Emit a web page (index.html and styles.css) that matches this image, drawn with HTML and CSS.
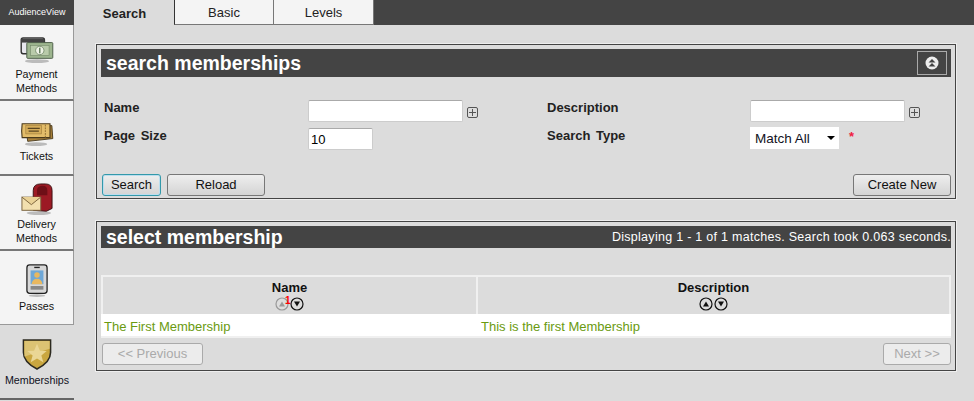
FILE: index.html
```html
<!DOCTYPE html>
<html>
<head>
<meta charset="utf-8">
<title>Memberships</title>
<link rel="stylesheet" href="styles.css">
</head>
<body>
<div class="app">
  <aside class="side">
    <div class="brand">AudienceView</div>
    <a class="nav nav-pay">
      <svg class="ico" viewBox="0 0 36 28"><ellipse cx="18" cy="26" rx="13" ry="2" fill="#bbb"/><rect x="1" y="1" width="25" height="17" rx="2" fill="#e8e8ee" stroke="#333" stroke-width="1.5"/><rect x="1" y="2" width="25" height="4" fill="#444"/><rect x="7" y="6" width="28" height="17" rx="1" fill="#9db58e" stroke="#4a5a45"/><rect x="11" y="9" width="20" height="11" fill="#b9cbaa" stroke="#6f8566" stroke-width=".6"/><circle cx="21" cy="14.500" r="4.500" fill="#eef3e6" stroke="#56704f" stroke-width=".7"/><rect x="20.300" y="11.500" width="1.400" height="6" fill="#56704f"/></svg>
      <span>Payment<br>Methods</span>
    </a>
    <a class="nav nav-tix">
      <svg class="ico" viewBox="0 0 36 28"><ellipse cx="17" cy="26" rx="12" ry="2" fill="#bbb"/><path d="M6 8 L34 6 L35 20 L8 23Z" fill="#a9813a" stroke="#4a3a1c"/><path d="M2 4 H32 V19 H2 Q1 11.500 2 4Z" fill="#e3bd6a" stroke="#4a3a1c" stroke-width="1.200"/><rect x="6" y="6" width="17" height="9" fill="#d5ad5a" stroke="#8d6c30" stroke-width=".5"/><path d="M8 9h13M9 12h11" stroke="#5a4520" stroke-width="1.300"/><path d="M27 5v14" stroke="#8d6c30" stroke-dasharray="2 1"/></svg>
      <span>Tickets</span>
    </a>
    <a class="nav nav-mail">
      <svg class="ico" viewBox="0 0 36 34"><ellipse cx="20" cy="32" rx="13" ry="2" fill="#bbb"/><path d="M14 29 V8 Q14 1 22 1 H27 Q34 1 34 8 V27 L28 30Z" fill="#9c1a24" stroke="#3a1012"/><path d="M18 7 Q19 3 24 3 Q29 3 29 8 V13 H18Z" fill="#6e0f17"/><rect x="2" y="15" width="20" height="14" fill="#f2dfae" stroke="#77603a"/><path d="M2 15 L12 23 L22 15" fill="#e9d196" stroke="#77603a"/></svg>
      <span>Delivery<br>Methods</span>
    </a>
    <a class="nav nav-pass">
      <svg class="ico" viewBox="0 0 24 36"><ellipse cx="12" cy="34.500" rx="9" ry="1.500" fill="#bbb"/><rect x="1" y="1" width="22" height="31" rx="3" fill="#d8d8d8" stroke="#222" stroke-width="1.400"/><rect x="9" y="3" width="6" height="1.500" fill="#222"/><rect x="5" y="7" width="14" height="15" fill="#6fa8d8"/><circle cx="12" cy="12" r="3" fill="#e9b860"/><path d="M6 22 Q7 16 12 16 Q17 16 18 22Z" fill="#e9b860"/><rect x="5" y="24" width="14" height="4" fill="#888"/></svg>
      <span>Passes</span>
    </a>
    <a class="nav nav-badge">
      <svg class="ico" viewBox="0 0 30 32"><path d="M1 1 H29 V14 Q29 24 15 31 Q1 24 1 14Z" fill="#c9a63f" stroke="#2c2a20" stroke-width="1.600"/><path d="M2 2 H28 V10 L2 18Z" fill="#dcc373"/><path d="M15 5 L18 12 L25 12.500 L19.500 17 L21.500 24 L15 20 L8.500 24 L10.500 17 L5 12.500 L12 12Z" fill="#ead695"/></svg>
      <span>Memberships</span>
    </a>
  </aside>
  <main class="main">
    <nav class="tabs">
      <a class="tab tab-active">Search</a>
      <a class="tab">Basic</a>
      <a class="tab">Levels</a>
    </nav>
    <section class="panel panel-search">
      <header class="bar bar-search">
        <h2 class="title">search memberships</h2>
        <span class="collapse"><svg viewBox="0 0 14 14" width="14" height="14"><circle cx="7" cy="7" r="6.500" fill="#eee"/><path d="M3.500 6.500 L7 3 L10.500 6.500ZM3.500 10.500 L7 7 L10.500 10.500Z" fill="#444"/></svg></span>
      </header>
      <div class="form">
        <div class="cell lbl">Name</div>
        <div class="cell"><span class="inp inp-wide"></span><span class="plus"></span></div>
        <div class="cell lbl">Description</div>
        <div class="cell"><span class="inp inp-wide"></span><span class="plus"></span></div>
        <div class="cell lbl lbl-spaced">Page Size</div>
        <div class="cell"><span class="inp inp-small">10</span></div>
        <div class="cell lbl lbl-spaced">Search Type</div>
        <div class="cell"><span class="select">Match All<i class="caret"></i></span><span class="req">*</span></div>
      </div>
      <div class="actions">
        <button class="btn btn-focus">Search</button>
        <button class="btn btn-reload">Reload</button>
        <button class="btn btn-create">Create New</button>
      </div>
    </section>
    <section class="panel panel-select">
      <header class="bar bar-select">
        <h2 class="title">select membership</h2>
        <span class="stats">Displaying 1 - 1 of 1 matches. Search took 0.063 seconds.</span>
      </header>
      <div class="table">
        <div class="th">Name
          <div class="sort sort-name"><span class="arrow arrow-off"><svg viewBox="0 0 14 14"><circle cx="7" cy="7" r="6" fill="#ddd" stroke="#999" stroke-width="1.200"/><path d="M4 9.500 L7 4.500 L10 9.500Z" fill="#999"/></svg><b class="rank">1</b></span><span class="arrow"><svg viewBox="0 0 14 14"><circle cx="7" cy="7" r="6" fill="#ddd" stroke="#111" stroke-width="1.200"/><path d="M4 4.500 L10 4.500 L7 9.500Z" fill="#111"/></svg></span></div>
        </div>
        <div class="th">Description
          <div class="sort"><span class="arrow"><svg viewBox="0 0 14 14"><circle cx="7" cy="7" r="6" fill="#ddd" stroke="#111" stroke-width="1.200"/><path d="M4 9.500 L7 4.500 L10 9.500Z" fill="#111"/></svg></span><span class="arrow"><svg viewBox="0 0 14 14"><circle cx="7" cy="7" r="6" fill="#ddd" stroke="#111" stroke-width="1.200"/><path d="M4 4.500 L10 4.500 L7 9.500Z" fill="#111"/></svg></span></div>
        </div>
        <div class="td">The First Membership</div>
        <div class="td">This is the first Membership</div>
      </div>
      <div class="pager">
        <button class="btn btn-off btn-prev">&lt;&lt; Previous</button>
        <button class="btn btn-off btn-next">Next &gt;&gt;</button>
      </div>
    </section>
  </main>
</div>
</body>
</html>
```
FILE: styles.css
```css
* { box-sizing: border-box; }
html, body { margin: 0; height: 401px; overflow: hidden; }
body { background: #dcdcdc; font-family: "Liberation Sans", Arial, sans-serif; font-size: 13px; color: #000; }
.app { display: flex; height: 401px; }
.side { width: 75px; flex: none; display: flex; flex-direction: column; }
.brand { height: 25px; background: #444; color: #fff; font-size: 9px; line-height: 24px; text-align: center; width: 74px; }
.nav { display: flex; flex-direction: column; align-items: center; width: 74px; height: 75px; background: #f4f4f4; border-right: 1px solid #999; border-bottom: 2px solid #777; font-size: 10.700px; line-height: 14px; text-align: center; color: #111; }
.ico { display: block; flex: none; }
.nav-pay { height: 76px; padding-top: 12px; }
.nav-pay .ico { width: 36px; height: 26px; margin-bottom: 4px; }
.nav-tix { padding-top: 19px; }
.nav-tix .ico { width: 36px; height: 26px; margin-bottom: 3px; }
.nav-mail { padding-top: 7px; }
.nav-mail .ico { width: 36px; height: 32px; margin-bottom: 2px; }
.nav-pass { height: 74px; padding-top: 13px; border-bottom-width: 1px; border-bottom-color: #999; }
.nav-pass .ico { width: 24px; height: 33px; margin-bottom: 2px; }
.nav-badge { padding-top: 14px; background: #dcdcdc; border-right: 0; border-bottom-color: #666; color: #112; }
.nav-badge .ico { width: 30px; height: 31px; margin-bottom: 3px; }
.main { flex: 1; min-width: 0; }
.tabs { display: flex; height: 25px; background: #444; }
.tab { width: 100px; height: 25px; background: #f4f4f4; border: 1px solid #777; border-top: 0; border-left: 0; text-align: center; font-size: 13px; line-height: 25px; color: #222; }
.tab:nth-child(2) { border-left: 1px solid #333; }
.tab-active { width: 99px; background: #dcdcdc; border: 0; font-weight: bold; font-size: 13px; line-height: 27px; color: #222; }
.panel { margin-left: 21px; width: 860px; border: 1px solid #444; box-shadow: 0 0 0 1px #eee; padding: 4px; }
.panel-search { margin-top: 19px; height: 155px; }
.panel-select { margin-top: 22px; height: 150px; }
.bar { display: flex; justify-content: space-between; align-items: center; background: #444; color: #fff; }
.bar-search { height: 28px; padding: 0 4px 0 5px; }
.bar-select { height: 22px; padding: 0 0 0 5px; }
.title { margin: 0; font-weight: bold; font-size: 19.500px; }
.collapse { width: 30px; height: 24px; border: 1px solid #aaa; display: flex; align-items: center; justify-content: center; }
.collapse svg { display: block; }
.stats { font-size: 12.500px; letter-spacing: .28px; white-space: nowrap; }
.form { display: grid; grid-template-columns: 204px 239px 203px 1fr; grid-auto-rows: 28px; padding: 23px 0 0 3px; }
.cell { display: flex; align-items: flex-start; }
.lbl { font-weight: bold; font-size: 13px; line-height: 16px; color: #222; }
.lbl-spaced { word-spacing: 2px; }
.inp { display: block; height: 22px; background: #fff; border: 1px solid #ccc; border-top-color: #aaa; border-radius: 2px; font-size: 13px; line-height: 22px; padding-left: 2px; }
.inp-wide { width: 155px; }
.inp-small { width: 65px; }
.plus { width: 11px; height: 11px; margin: 7px 0 0 4px; border: 1px solid #555; border-radius: 2px; background: linear-gradient(#555,#555) center/7px 1px no-repeat, linear-gradient(#555,#555) center/1px 7px no-repeat, #ddd; }
.select { display: flex; align-items: center; justify-content: space-between; width: 89px; height: 22px; margin-top: -1px; background: #fff; padding: 0 4px 0 5px; font-size: 13.500px; color: #112; }
.caret { width: 0; height: 0; border: 4px solid transparent; border-top: 4px solid #000; border-bottom: 0; }
.req { color: #f02040; font-size: 13px; font-weight: bold; margin: 2px 0 0 10px; line-height: 14px; }
.actions { display: flex; padding-top: 18px; }
.btn { height: 22px; margin: 0; padding: 0 0 2px; font: 13px "Liberation Sans", Arial, sans-serif; color: #111; background: linear-gradient(#eee, #d4d4d4); border: 1px solid #777; border-radius: 3px; }
.btn-focus { width: 59px; margin-left: 1px; border-color: #39a; box-shadow: inset 0 0 0 1px #bde; }
.btn-reload { width: 98px; margin-left: 6px; }
.btn-create { width: 98px; margin-left: auto; }
.table { display: grid; grid-template-columns: 377px 473px; margin-top: 27px; border: 1px solid #f0f0f0; border-width: 2px 0; background: #fff; }
.th { background: #dcdcdc; border: 1px solid #f0f0f0; border-width: 0 2px; text-align: center; font-weight: bold; font-size: 13px; line-height: 17px; height: 37px; color: #111; padding-top: 2px; }
.th + .th { border-left: 0; }
.sort { display: flex; justify-content: center; gap: 1px; margin-top: 1px; }
.sort-name { margin-left: -1px; }
.arrow { position: relative; width: 14px; height: 14px; }
.arrow svg { display: block; width: 14px; height: 14px; }
.rank { position: absolute; right: -2px; top: -1px; color: #f00; font-size: 10px; line-height: 10px; }
.td { background: #fff; color: #6a9a10; font-size: 13px; line-height: 21px; height: 22px; padding: 2px 0 0 3px; }
.pager { display: flex; justify-content: space-between; padding: 5px 0 0 1px; }
.btn-off { background: #ececec; border-color: #aaa; color: #aaa; height: 22px; }
.btn-prev { width: 101px; }
.btn-next { width: 68px; }
```
